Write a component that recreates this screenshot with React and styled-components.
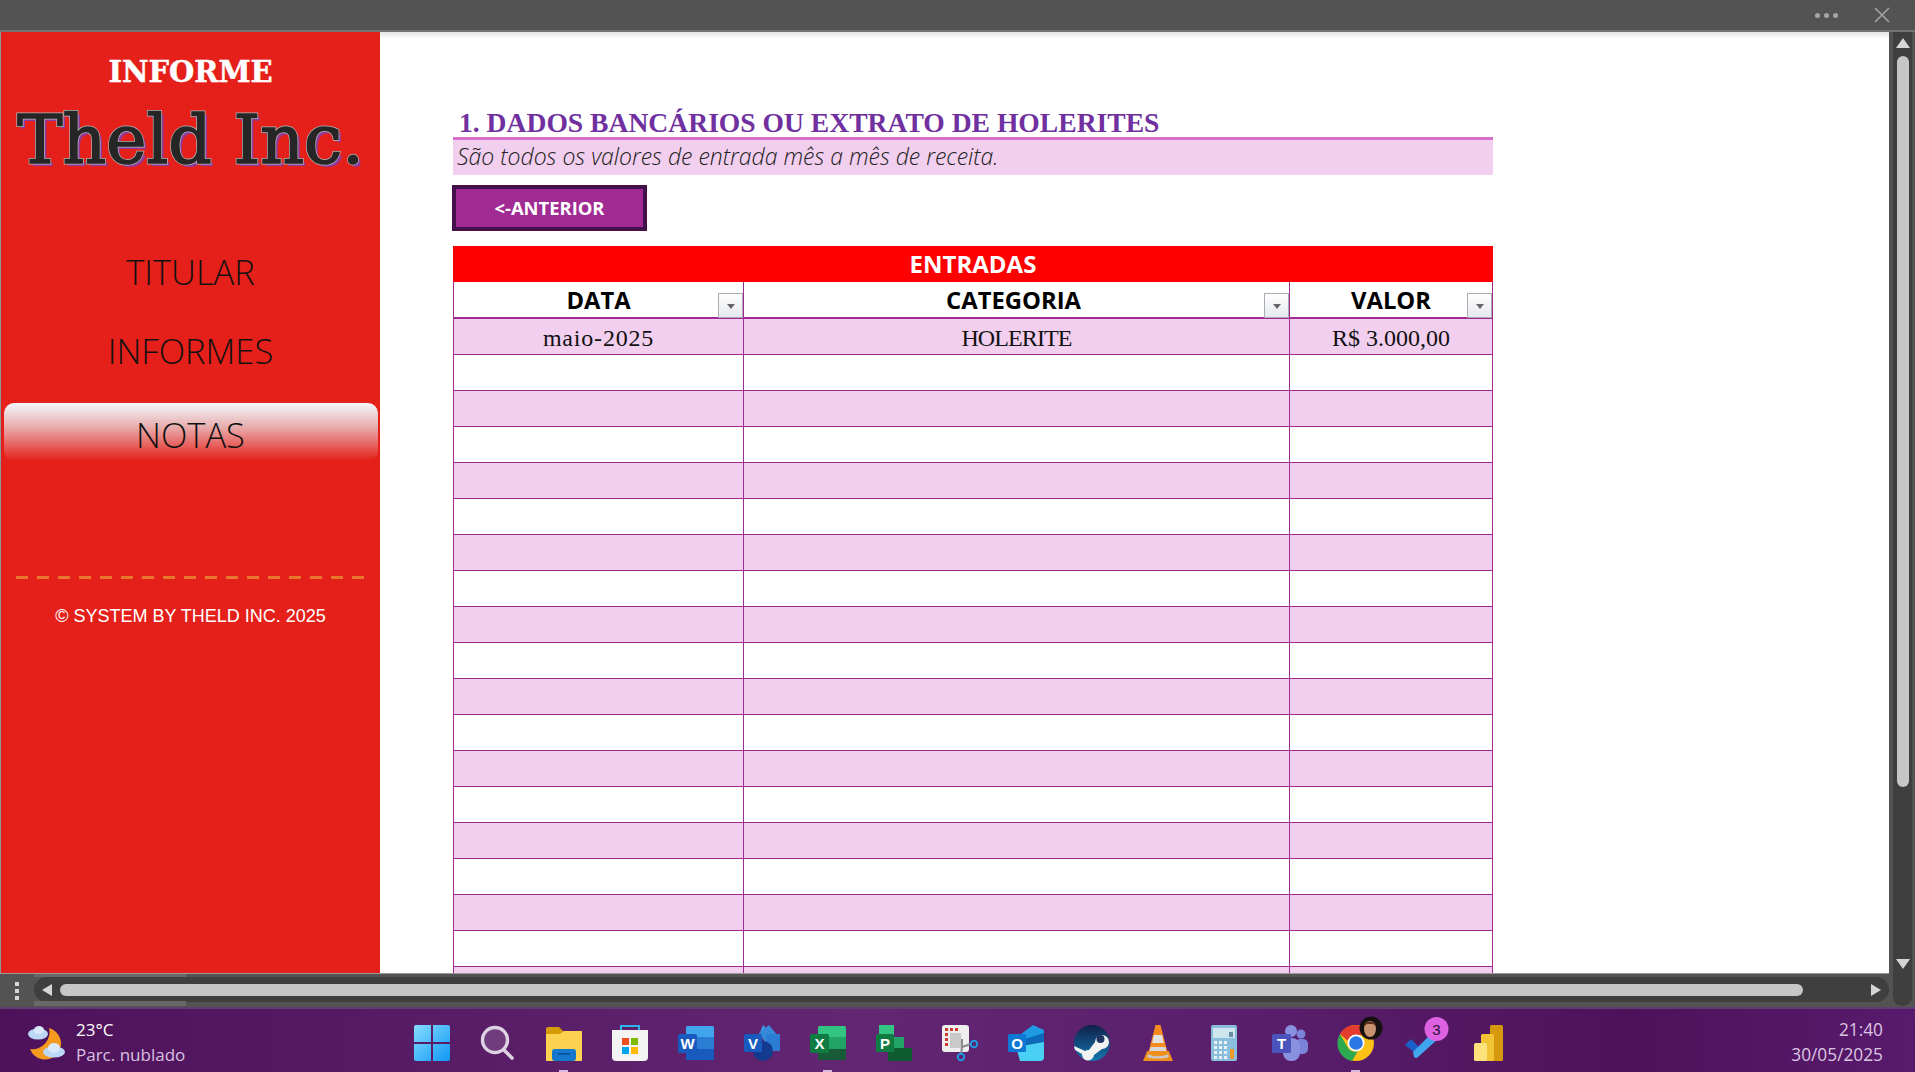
import React from 'react';
import styled, { createGlobalStyle } from 'styled-components';

//------------------------------------------------------------------------------
// STYLE:
//------------------------------------------------------------------------------
const Global = createGlobalStyle`
  html, body { margin: 0; padding: 0; background: #fff; }
  * { box-sizing: border-box; }
`;

const Screen = styled.div`
  width: 1915px;
  height: 1072px;
  overflow: hidden;
  display: flex;
  flex-direction: column;
  font-family: 'Open Sans', sans-serif;
`;

const TopBar = styled.div`
  height: 32px;
  flex: none;
  background: #535353;
  border-bottom: 2px solid #747474;
  display: flex;
  align-items: center;
  justify-content: flex-end;
  gap: 36px;
  padding: 0 25px 0 0;
`;

const Dots = styled.div`
  display: flex;
  gap: 4px;
`;

const Dot = styled.span`
  width: 5px;
  height: 5px;
  border-radius: 50%;
  background: #a5a5a5;
`;

const Workspace = styled.div`
  flex: 1;
  min-height: 0;
  display: flex;
  background: #535353;
`;

const LeftColumn = styled.div`
  flex: 1;
  min-width: 0;
  display: flex;
  flex-direction: column;
`;

const Sheet = styled.div`
  height: 942px;
  flex: none;
  display: flex;
  background: #fff;
  overflow: hidden;
  border-bottom: 1px solid #9a9a9a;
  border-left: 1px solid #8a9a9c;
`;

const Sidebar = styled.aside`
  width: 379px;
  flex: none;
  background: #e51f19;
  display: flex;
  flex-direction: column;
  align-items: center;
  padding-top: 21px;
`;

const Kicker = styled.div`
  font-family: 'DejaVu Serif', serif;
  font-weight: 700;
  font-size: 29px;
  line-height: 38px;
  color: #fff;
  -webkit-text-stroke: 0.5px #fff;
`;

const Brand = styled.div`
  position: relative;
  font-family: 'DejaVu Serif', serif;
  font-weight: 400;
  font-size: 68px;
  line-height: 66px;
  margin-top: 16px;
  color: #b5b5b5;
  white-space: nowrap;
  -webkit-text-stroke: 3px #b5b5b5;
  text-shadow: 3px 3px 0 #8e3aa0;
  &::after {
    content: attr(data-text);
    position: absolute;
    left: 0;
    top: 0;
    color: #262626;
    -webkit-text-stroke: 1.6px #262626;
    text-shadow: none;
  }
`;

const Menu = styled.nav`
  width: 100%;
  display: flex;
  flex-direction: column;
  align-items: center;
  margin-top: 58px;
`;

const MenuItem = styled.div`
  width: 374px;
  height: ${(p) => (p.$active ? '58px' : '79px')};
  margin-top: ${(p) => (p.$active ? '14px' : '0')};
  padding-top: ${(p) => (p.$active ? '5px' : '2px')};
  display: flex;
  align-items: center;
  justify-content: center;
  font-weight: 300;
  font-size: 34.5px;
  color: #111;
  border-radius: 10px;
  background: ${(p) => (p.$active ? 'linear-gradient(#f3f6fc 0%, #e8b0b0 40%, #e51f19 100%)' : 'transparent')};
`;

const Divider = styled.div`
  width: 349px;
  height: 3px;
  margin-top: 115px;
  background: repeating-linear-gradient(90deg, #e8762f 0 12px, transparent 12px 21px);
`;

const Copyright = styled.div`
  font-family: 'Liberation Sans', sans-serif;
  font-size: 18px;
  line-height: 22px;
  color: #fff;
  margin-top: 26px;
`;

const Content = styled.main`
  flex: 1;
  min-width: 0;
  padding: 73px 0 0 73px;
  background: linear-gradient(#e4e4e4 0, #fff 7px);
`;

const Title = styled.h1`
  margin: 0;
  width: 1040px;
  height: 32px;
  padding-left: 6px;
  font-family: 'Liberation Serif', serif;
  font-weight: 700;
  font-size: 27.6px;
  line-height: 35px;
  color: #7030a0;
  white-space: nowrap;
`;

const Subtitle = styled.div`
  width: 1040px;
  height: 38px;
  border-top: 3px solid #d86fcd;
  background: #f2cfee;
  padding-left: 4px;
  font-style: italic;
  font-weight: 300;
  font-size: 23px;
  line-height: 32px;
  color: #222;
`;

const BackButton = styled.button`
  display: flex;
  align-items: center;
  justify-content: center;
  width: 195px;
  height: 46px;
  margin: 10px 0 15px -1px;
  padding: 0 0 2px;
  background: #a02b93;
  border: 4px solid #43104a;
  border-radius: 0;
  color: #fff;
  font-family: 'Open Sans', sans-serif;
  font-weight: 700;
  font-size: 18.4px;
`;

const Table = styled.div`
  width: 1040px;
`;

const Banner = styled.div`
  height: 36px;
  background: #ff0000;
  color: #fff;
  font-weight: 700;
  font-size: 24px;
  line-height: 36px;
  text-align: center;
`;

const Row = styled.div`
  display: grid;
  grid-template-columns: 290px 546px 204px;
  height: ${(p) => (p.$head ? '37px' : '36px')};
  background: ${(p) => (p.$shade ? '#f2cfee' : '#fff')};
  border-bottom: ${(p) => (p.$head ? '2px' : '1.5px')} solid #a02b93;
`;

const Cell = styled.div`
  position: relative;
  border-left: 1.5px solid #a02b93;
  font-family: 'Liberation Serif', serif;
  font-size: 24px;
  line-height: 38px;
  letter-spacing: ${(p) => p.$track || 0}px;
  text-align: center;
  color: #111;
  &:last-child { border-right: 1.5px solid #a02b93; }
`;

const HeadCell = styled(Cell)`
  font-family: 'Open Sans', sans-serif;
  font-weight: 700;
  font-size: 23.8px;
  line-height: 36px;
  color: #000;
  padding-right: ${(p) => p.$pad || 0}px;
`;

const FilterButton = styled.span`
  position: absolute;
  right: 0;
  bottom: 0;
  width: 25px;
  height: 25px;
  border: 1px solid #a9adb3;
  background: linear-gradient(#fff, #e6e9ee);
  display: flex;
  align-items: center;
  justify-content: center;
  &::after {
    content: '';
    border-left: 4.5px solid transparent;
    border-right: 4.5px solid transparent;
    border-top: 5px solid #666;
    margin-top: 2px;
  }
`;

const HScroll = styled.div`
  flex: 1;
  display: flex;
  align-items: center;
  position: relative;
`;

const GripDots = styled.div`
  width: 34px;
  flex: none;
  display: flex;
  flex-direction: column;
  align-items: center;
  gap: 3px;
  & span { width: 4px; height: 4px; background: #d5d5d5; }
`;

const HTrack = styled.div`
  flex: 1;
  height: 25px;
  margin-top: -2px;
  border-radius: 13px;
  background: #3f3f3f;
  display: flex;
  align-items: center;
  padding: 0 8px;
`;

const HThumb = styled.div`
  width: 1743px;
  height: 12px;
  margin-left: 8px;
  border-radius: 6px;
  background: #c6c6c6;
`;

const SheetTabStub = styled.div`
  position: absolute;
  left: 34px;
  width: 152px;
  height: ${(p) => (p.$bottom ? '5px' : '3px')};
  ${(p) => (p.$bottom ? 'bottom: 1px;' : 'top: 0;')}
  background: #686868;
`;

const ArrowLeft = styled.span`
  border-top: 6px solid transparent;
  border-bottom: 6px solid transparent;
  border-right: 10px solid #d5d5d5;
`;

const ArrowRight = styled.span`
  margin-left: auto;
  border-top: 6px solid transparent;
  border-bottom: 6px solid transparent;
  border-left: 10px solid #d5d5d5;
`;

const VScroll = styled.div`
  width: 26px;
  flex: none;
  padding: 0 3px 1px 4px;
`;

const VTrack = styled.div`
  height: 974px;
  border-radius: 0 0 10px 10px;
  background: #3f3f3f;
  display: flex;
  flex-direction: column;
  align-items: center;
  padding-top: 6px;
`;

const ArrowUp = styled.span`
  border-left: 7px solid transparent;
  border-right: 7px solid transparent;
  border-bottom: 10px solid #d5d5d5;
`;

const ArrowDown = styled.span`
  margin-top: 172px;
  border-left: 7px solid transparent;
  border-right: 7px solid transparent;
  border-top: 10px solid #d5d5d5;
`;

const VThumb = styled.div`
  width: 12px;
  height: 731px;
  margin-top: 8px;
  border-radius: 6px;
  background: #c6c6c6;
`;

const Taskbar = styled.footer`
  height: 65px;
  flex: none;
  display: grid;
  grid-template-columns: 1fr auto 1fr;
  align-items: center;
  border-top: 2px solid #5f3f72;
  background: linear-gradient(90deg, #4e125b 0%, #622672 45%, #5a1f6c 65%, #4e125b 85%, #581a6c 100%);
  color: #fff;
`;

const Weather = styled.div`
  display: flex;
  align-items: center;
  gap: 10px;
  padding-left: 28px;
  margin-top: 4px;
`;

const WeatherText = styled.div`
  display: flex;
  flex-direction: column;
  font-size: 17px;
  line-height: 24.5px;
`;

const Muted = styled.span`
  color: #d9c2e0;
`;

const Apps = styled.div`
  display: flex;
  gap: 30px;
  padding-left: 4px;
`;

const AppSlot = styled.div`
  position: relative;
  width: 36px;
  height: 36px;
  margin-top: 5px;
`;

const RunningMark = styled.span`
  position: absolute;
  left: 13px;
  bottom: -13px;
  width: 9px;
  height: 4px;
  background: #d9b8dd;
`;

const Clock = styled.div`
  justify-self: end;
  padding-right: 32px;
  margin-top: 4px;
  text-align: right;
  display: flex;
  flex-direction: column;
  font-size: 17.3px;
  line-height: 24.5px;
  color: #dcc6e3;
`;

const iconLabel = { fontFamily: 'Liberation Sans, sans-serif', fontWeight: 700, textAnchor: 'middle' };

//------------------------------------------------------------------------------
// ICONS:
//------------------------------------------------------------------------------
const Svg = ({ children, w = 36, h = 36, vb = '0 0 36 36' }) => (
  <svg width={w} height={h} viewBox={vb} style={{ display: 'block', overflow: 'visible' }}>{children}</svg>
);

const WeatherIcon = () => (
  <Svg w={38} h={36} vb="0 0 38 36">
    <path d="M21 3a16 16 0 1 1-19 21 17 17 0 0 0 19-21z" fill="#f39a1f" />
    <ellipse cx="10" cy="9" rx="10" ry="5.5" fill="#bcd8f5" />
    <ellipse cx="11" cy="5" rx="5" ry="4" fill="#d9e9fa" />
    <ellipse cx="26" cy="27" rx="11" ry="5.5" fill="#bcd8f5" />
    <ellipse cx="26" cy="23" rx="6" ry="5" fill="#d9e9fa" />
  </Svg>
);

const WindowsIcon = () => (
  <Svg>
    <defs>
      <linearGradient id="win" x1="0" y1="0" x2="1" y2="1">
        <stop offset="0" stopColor="#86dcff" />
        <stop offset="1" stopColor="#0f98f4" />
      </linearGradient>
    </defs>
    <path d="M2 0h15v17H0V2a2 2 0 0 1 2-2zM19 0h15a2 2 0 0 1 2 2v15H19zM0 19h17v17H2a2 2 0 0 1-2-2zM19 19h17v15a2 2 0 0 1-2 2H19z" fill="url(#win)" />
  </Svg>
);

const SearchIcon = () => (
  <Svg>
    <circle cx="15" cy="15" r="12.5" fill="rgba(255,255,255,.14)" stroke="#dcd2e2" strokeWidth="3.4" />
    <path d="M24 25l8 8" stroke="#dcd2e2" strokeWidth="3.6" strokeLinecap="round" />
  </Svg>
);

const FolderIcon = () => (
  <Svg>
    <path d="M0 4a2 2 0 0 1 2-2h11l4 4h19v6H0z" fill="#d69c08" />
    <path d="M0 9h14l4-3h18v30H0z" fill="#fdd150" />
    <rect x="6" y="24" width="24" height="12" rx="3" fill="#1478cf" />
    <rect x="12" y="28" width="12" height="1.6" fill="#0c4f96" />
  </Svg>
);

const StoreIcon = () => (
  <Svg>
    <path d="M9 7V1h18v6" fill="none" stroke="#2bb4ee" strokeWidth="2" />
    <path d="M0 5h36v27a4 4 0 0 1-4 4H4a4 4 0 0 1-4-4z" fill="#f4f4f4" />
    <rect x="10" y="13" width="7" height="7" fill="#f25022" />
    <rect x="19" y="13" width="7" height="7" fill="#7fba00" />
    <rect x="10" y="22" width="7" height="7" fill="#00a4ef" />
    <rect x="19" y="22" width="7" height="7" fill="#ffb900" />
  </Svg>
);

const OfficeIcon = ({ letter, tones, badge }) => (
  <Svg>
    <rect x="8" y="1" width="28" height="34" rx="1.5" fill={tones[0]} />
    <rect x="8" y="12" width="28" height="12" fill={tones[1]} />
    <rect x="8" y="24" width="28" height="11" fill={tones[2]} />
    <rect x="0" y="9" width="19" height="19" rx="1.5" fill={badge} />
    <text x="9.5" y="24" fontSize="15" fill="#fff" style={iconLabel}>{letter}</text>
  </Svg>
);

const VisioIcon = () => (
  <Svg>
    <path d="M19 0l10 10H15z" fill="#3e9ae6" />
    <path d="M15 8L25 0l8 10-10 10z" fill="#3688d8" />
    <rect x="22" y="9" width="14" height="17" rx="1" fill="#2b7cd3" />
    <circle cx="19" cy="26" r="10" fill="#123a8e" />
    <rect x="0" y="9" width="18" height="18" rx="1.5" fill="#185abd" />
    <text x="9" y="23.5" fontSize="15" fill="#fff" style={iconLabel}>V</text>
  </Svg>
);

const ProjectIcon = () => (
  <Svg>
    <rect x="3" y="0" width="15" height="12" fill="#33c481" />
    <rect x="8" y="12" width="20" height="12" fill="#21a366" />
    <rect x="12" y="23" width="24" height="13" fill="#0e5c2f" />
    <rect x="0" y="9" width="18" height="18" rx="1.5" fill="#107c41" />
    <text x="9" y="23.5" fontSize="15" fill="#fff" style={iconLabel}>P</text>
  </Svg>
);

const SnipIcon = () => (
  <Svg>
    <rect x="0" y="0" width="27" height="27" rx="3" fill="#efefef" />
    <path d="M3 3h3v3H3zM8 3h3v3H8zM13 3h3v3h-3zM3 8h3v3H3zM3 13h3v3H3zM3 18h3v3H3z" fill="#d03a2a" />
    <rect x="8" y="8" width="11" height="15" fill="#c9c9c9" />
    <path d="M20 14v8l-1 7M20 22l9-3" fill="none" stroke="#8a8a8a" strokeWidth="2" />
    <circle cx="32" cy="19" r="3.2" fill="none" stroke="#1d9ae0" strokeWidth="2" />
    <circle cx="19" cy="32" r="3.2" fill="none" stroke="#1d9ae0" strokeWidth="2" />
  </Svg>
);

const OutlookIcon = () => (
  <Svg>
    <path d="M8 13L25 0l11 5v12z" fill="#1e9be3" />
    <path d="M8 17l28-9v9L19 26z" fill="#0d69b9" />
    <path d="M8 22l28-5v15a4 4 0 0 1-4 4H12z" fill="#4bd0f5" />
    <rect x="0" y="9" width="18" height="18" rx="1.5" fill="#0f78d4" />
    <text x="9" y="23.5" fontSize="15" fill="#fff" style={iconLabel}>O</text>
  </Svg>
);

const SteamIcon = () => (
  <Svg>
    <defs>
      <linearGradient id="steam" x1="0" y1="0" x2="0" y2="1">
        <stop offset="0" stopColor="#10204a" />
        <stop offset="1" stopColor="#1477b0" />
      </linearGradient>
    </defs>
    <circle cx="18" cy="18" r="18" fill="url(#steam)" />
    <path d="M0 21l11 5a6 6 0 0 1 4-1l6-8a7 7 0 1 1 7 7l-8 6a6 6 0 0 1-12-1L1 25z" fill="#f2f2f2" />
    <circle cx="26.5" cy="14" r="4" fill="#1d3560" />
  </Svg>
);

const VlcIcon = () => (
  <Svg>
    <g transform="translate(3 0) scale(.833 1)">
      <path d="M15 0h6l9 29H6z" fill="#f58a1f" />
      <path d="M13 10h10l2 8H11z" fill="#e2e2e2" />
      <path d="M9 22h18l2 7H7z" fill="#d8d8d8" />
      <path d="M5 26h26l5 10H0z" fill="#f0901c" />
      <path d="M6 29c6 3 18 3 24 0l1 3c-6 2-20 2-26 0z" fill="#c9c9c9" />
    </g>
  </Svg>
);

const CalcIcon = () => (
  <Svg>
    <rect x="5" y="0" width="26" height="36" rx="2" fill="#89bfdc" />
    <rect x="7" y="3" width="22" height="10" fill="#cfe6ee" />
    <rect x="23" y="7" width="4" height="5" fill="#6a8ea6" />
    <path d="M8 16h3v3H8zM13 16h3v3h-3zM18 16h3v3h-3zM8 21h3v3H8zM13 21h3v3h-3zM18 21h3v3h-3zM8 26h3v3H8zM13 26h3v3h-3zM18 26h3v3h-3zM8 31h3v3H8zM13 31h3v3h-3zM18 31h3v3h-3z" fill="#e8f2f6" />
    <rect x="24" y="24" width="4" height="10" fill="#f09a2a" />
  </Svg>
);

const TeamsIcon = () => (
  <Svg>
    <circle cx="29" cy="9" r="4.5" fill="#7b83d8" />
    <rect x="23" y="14" width="13" height="15" rx="5" fill="#7b83d8" />
    <circle cx="19" cy="6" r="6" fill="#8a90e0" />
    <rect x="11" y="13" width="17" height="23" rx="8" fill="#8a90e0" />
    <rect x="0" y="9" width="19" height="19" rx="1.5" fill="#4b53bc" />
    <text x="9.5" y="24" fontSize="15" fill="#fff" style={iconLabel}>T</text>
  </Svg>
);

const ChromeIcon = () => (
  <Svg>
    <circle cx="18" cy="18" r="18" fill="#fbc116" />
    <path d="M18 0a18 18 0 0 1 16 10H18a8 8 0 0 0-8 6L2 9A18 18 0 0 1 18 0z" fill="#e33b2e" />
    <path d="M2 9l8 14a8 8 0 0 0 10 3l-6 10A18 18 0 0 1 2 9z" fill="#2da94f" />
    <circle cx="18" cy="18" r="8.5" fill="#fff" />
    <circle cx="18" cy="18" r="6.8" fill="#2b78e4" />
    <circle cx="33" cy="3" r="11.5" fill="#161010" />
    <ellipse cx="32" cy="4" rx="6" ry="8" fill="#c7916f" />
    <path d="M26 1c2-6 10-6 12 0l-3-2h-6z" fill="#5b2f1c" />
  </Svg>
);

const TodoIcon = () => (
  <Svg>
    <path d="M1 20l6-6 8 8-5 5z" fill="#1a5fc9" />
    <path d="M9 27L28 8l6 6-20 18a3 3 0 0 1-4 0z" fill="#41a5ee" />
    <circle cx="32.5" cy="4" r="12" fill="#dc62e2" />
    <text x="32.5" y="9.5" fontSize="15" fill="#2a1030" style={{ fontFamily: 'Liberation Sans, sans-serif', textAnchor: 'middle' }}>3</text>
  </Svg>
);

const PowerBiIcon = () => (
  <Svg>
    <rect x="20" y="0" width="13" height="36" rx="1.5" fill="#d49a0b" />
    <rect x="11" y="9" width="13" height="27" rx="1.5" fill="#f2c335" />
    <rect x="4" y="18" width="13" height="18" rx="1.5" fill="#fbe27a" />
  </Svg>
);

const CloseIcon = () => (
  <Svg w={16} h={16} vb="0 0 16 16">
    <path d="M1 1l14 14M15 1L1 15" stroke="#a5a5a5" strokeWidth="1.5" />
  </Svg>
);

//------------------------------------------------------------------------------
// COMPONENT:
//------------------------------------------------------------------------------
const WORD_TONES = ['#41a5ee', '#2b7cd3', '#185abd'];
const EXCEL_TONES = ['#33c481', '#21a366', '#185c37'];

const APPS = [
  { id: 'windows', icon: <WindowsIcon /> },
  { id: 'search', icon: <SearchIcon /> },
  { id: 'folder', icon: <FolderIcon />, running: true },
  { id: 'store', icon: <StoreIcon /> },
  { id: 'word', icon: <OfficeIcon letter="W" tones={WORD_TONES} badge="#185abd" /> },
  { id: 'visio', icon: <VisioIcon /> },
  { id: 'excel', icon: <OfficeIcon letter="X" tones={EXCEL_TONES} badge="#107c41" />, running: true },
  { id: 'project', icon: <ProjectIcon /> },
  { id: 'snip', icon: <SnipIcon /> },
  { id: 'outlook', icon: <OutlookIcon /> },
  { id: 'steam', icon: <SteamIcon /> },
  { id: 'vlc', icon: <VlcIcon /> },
  { id: 'calc', icon: <CalcIcon /> },
  { id: 'teams', icon: <TeamsIcon /> },
  { id: 'chrome', icon: <ChromeIcon />, running: true },
  { id: 'todo', icon: <TodoIcon /> },
  { id: 'powerbi', icon: <PowerBiIcon /> },
];

const EMPTY_ROWS = Array.from({ length: 18 }, (_, i) => i);

const App = () => (
  <Screen>
    <Global />
    <TopBar>
      <Dots>
        <Dot />
        <Dot />
        <Dot />
      </Dots>
      <CloseIcon />
    </TopBar>
    <Workspace>
      <LeftColumn>
        <Sheet>
          <Sidebar>
            <Kicker>INFORME</Kicker>
            <Brand data-text="Theld Inc.">Theld Inc.</Brand>
            <Menu>
              <MenuItem>TITULAR</MenuItem>
              <MenuItem>INFORMES</MenuItem>
              <MenuItem $active>NOTAS</MenuItem>
            </Menu>
            <Divider />
            <Copyright>© SYSTEM BY THELD INC. 2025</Copyright>
          </Sidebar>
          <Content>
            <Title>1. DADOS BANCÁRIOS OU EXTRATO DE HOLERITES</Title>
            <Subtitle>São todos os valores de entrada mês a mês de receita.</Subtitle>
            <BackButton>&lt;-ANTERIOR</BackButton>
            <Table>
              <Banner>ENTRADAS</Banner>
              <Row $head>
                <HeadCell>DATA<FilterButton /></HeadCell>
                <HeadCell $pad={6}>CATEGORIA<FilterButton /></HeadCell>
                <HeadCell>VALOR<FilterButton /></HeadCell>
              </Row>
              <Row $shade>
                <Cell $track={0.8}>maio-2025</Cell>
                <Cell $track={-0.9}>HOLERITE</Cell>
                <Cell>R$ 3.000,00</Cell>
              </Row>
              {EMPTY_ROWS.map((i) => (
                <Row key={i} $shade={i % 2 === 1}>
                  <Cell />
                  <Cell />
                  <Cell />
                </Row>
              ))}
            </Table>
          </Content>
        </Sheet>
        <HScroll>
          <SheetTabStub />
          <SheetTabStub $bottom />
          <GripDots>
            <span />
            <span />
            <span />
          </GripDots>
          <HTrack>
            <ArrowLeft />
            <HThumb />
            <ArrowRight />
          </HTrack>
        </HScroll>
      </LeftColumn>
      <VScroll>
        <VTrack>
          <ArrowUp />
          <VThumb />
          <ArrowDown />
        </VTrack>
      </VScroll>
    </Workspace>
    <Taskbar>
      <Weather>
        <WeatherIcon />
        <WeatherText>
          <span>23°C</span>
          <Muted>Parc. nublado</Muted>
        </WeatherText>
      </Weather>
      <Apps>
        {APPS.map((app) => (
          <AppSlot key={app.id}>
            {app.icon}
            {app.running && <RunningMark />}
          </AppSlot>
        ))}
      </Apps>
      <Clock>
        <span>21:40</span>
        <span>30/05/2025</span>
      </Clock>
    </Taskbar>
  </Screen>
);

export default App;
